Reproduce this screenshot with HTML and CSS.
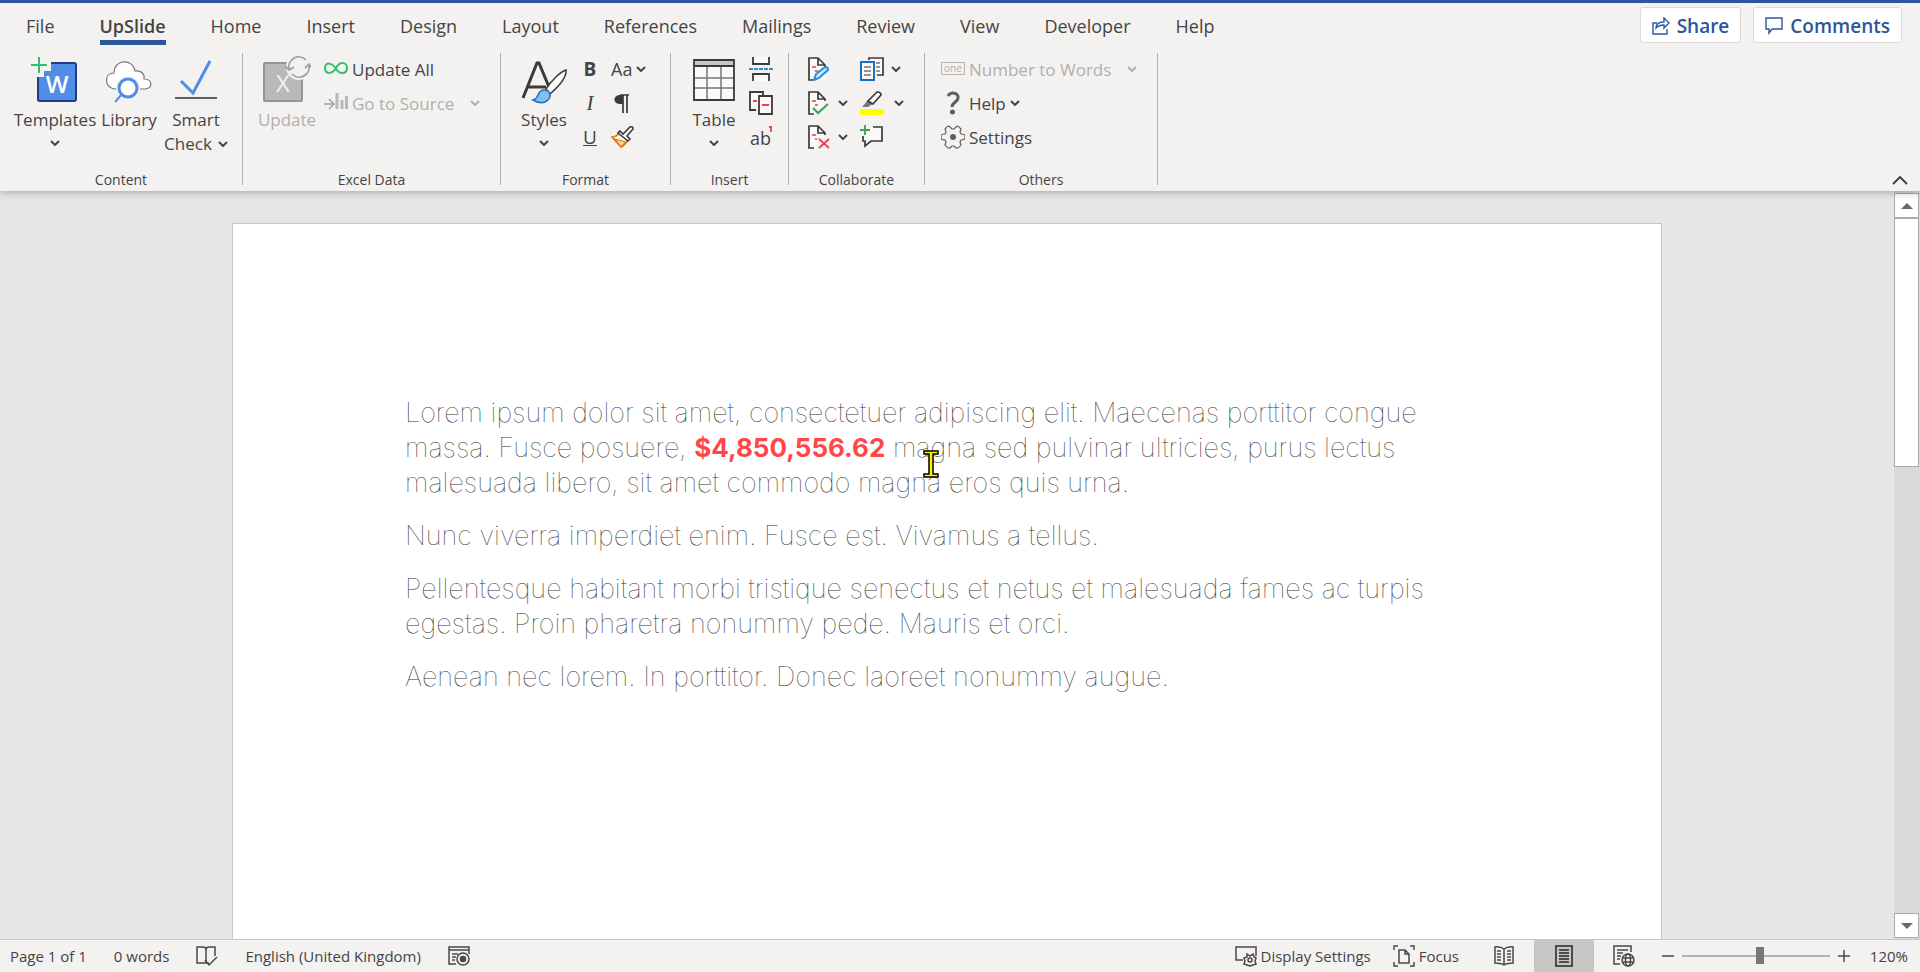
FILE: index.html
```html
<!DOCTYPE html>
<html lang="en">
<head>
    <meta charset="UTF-8">
    <meta name="viewport" content="width=device-width, initial-scale=1.0">
    <title>Document - UpSlide</title>
    <link rel="stylesheet" href="styles.css">
</head>
<body>
    <!-- shared icons -->
    <svg class="defs" width="0" height="0" aria-hidden="true">
        <symbol id="chevron" viewBox="0 0 10 6"><path d="M1 1l4 4 4-4" fill="none" stroke="currentColor" stroke-width="2"/></symbol>
        <symbol id="doc" viewBox="0 0 24 24">
            <path d="M2 1h9l7 7v15H2z" fill="#fafafa"/>
            <path d="M7 23H2V1h9l7 7v2M11 1v7h7" fill="none" stroke="#3b3a39" stroke-width="1.7"/>
            <path d="M5 10h4M8 14h3" stroke="#e8404a" stroke-width="1.7"/>
        </symbol>
    </svg>

    <header class="ribbon">
        <div class="tab-bar">
            <nav class="tabs">
                <a href="#">File</a>
                <a href="#" class="active">UpSlide</a>
                <a href="#">Home</a>
                <a href="#">Insert</a>
                <a href="#">Design</a>
                <a href="#">Layout</a>
                <a href="#">References</a>
                <a href="#">Mailings</a>
                <a href="#">Review</a>
                <a href="#">View</a>
                <a href="#">Developer</a>
                <a href="#">Help</a>
            </nav>
            <div class="actions">
                <button class="action-btn">
                    <svg width="18" height="18" viewBox="0 0 18 18" fill="none" stroke="currentColor" stroke-width="1.4"><path d="M5 6H1v11h14v-5"/><path d="M4 11c0-4 3-6 8-6V1l5 5-5 5V8c-4 0-6 1-8 3z"/></svg>
                    Share
                </button>
                <button class="action-btn">
                    <svg width="18" height="18" viewBox="0 0 18 18" fill="none" stroke="currentColor" stroke-width="1.4"><path d="M1 1h16v11H7l-3 4v-4H1z"/></svg>
                    Comments
                </button>
            </div>
        </div>

        <div class="groups">
            <section class="group content">
                <div class="tools">
                    <button class="big templates">
                        <svg width="48" height="48" viewBox="0 0 48 48">
                            <path d="M20 7h23q2 0 2 2v34q0 3-2 3H9q-3 0-3-3V21h7v-6h7z" fill="#4f8de6"/>
                            <path d="M20 7h23q2 0 2 2v34q0 2-2 2H9q-2 0-2-2V21" fill="none" stroke="#203e86" stroke-width="2"/>
                            <path d="M8 1v16M0 9h16" stroke="#2fc26e" stroke-width="2"/>
                            <text x="26" y="37" class="glyph-w">W</text>
                        </svg>
                        <span>Templates</span>
                        <svg class="chev"><use href="#chevron"/></svg>
                    </button>
                    <button class="big library">
                        <svg width="48" height="48" viewBox="0 0 48 48">
                            <path d="M12 33H9C-1 30-1 17 9 17 9 3 28 2 30 15c6-1 10 3 9 8 9 0 9 10 1 10z" fill="#fff" stroke="#777" stroke-width="1.2"/>
                            <circle cx="23" cy="32" r="12" fill="#f3f2f1"/>
                            <path d="M17 38l-7 8" stroke="#4f8de6" stroke-width="2"/>
                            <circle cx="23" cy="32" r="9" fill="#fff" stroke="#4f8de6" stroke-width="3"/>
                        </svg>
                        <span>Library</span>
                    </button>
                    <button class="big smart">
                        <svg width="48" height="48" viewBox="0 0 48 48"><path d="M9 25l12 12L38 5" fill="none" stroke="#4f8de6" stroke-width="3"/><path d="M3 42h42" stroke="#605e5c" stroke-width="2"/></svg>
                        <span>Smart</span>
                        <span class="with-chev">Check <svg class="chev"><use href="#chevron"/></svg></span>
                    </button>
                </div>
                <h2>Content</h2>
            </section>

            <section class="group excel">
                <div class="tools">
                    <button class="big update" disabled>
                        <svg width="48" height="48" viewBox="0 0 48 48">
                            <rect x="1" y="7" width="38" height="38" rx="1" fill="#bab8bb" stroke="#979593" stroke-width="2"/>
                            <text x="20" y="36" class="glyph-x">X</text>
                            <circle cx="36" cy="11" r="13" fill="#f3f2f1"/>
                            <path d="M26 13a10 10 0 0 1 17-9M46 9a10 10 0 0 1-17 9" fill="none" stroke="#a3a1a0" stroke-width="1.8"/>
                            <path d="M22 10l4 4 5-3M42 12l4-4 3 4" fill="none" stroke="#a3a1a0" stroke-width="1.8"/>
                        </svg>
                        <span>Update</span>
                    </button>
                    <div class="stack">
                        <button class="row">
                            <svg width="24" height="24" viewBox="0 0 24 24"><path d="M12 12C8 5 1 5 1 11s7 7 11 0 11-6 11 0-7 7-11 1z" fill="none" stroke="#2fc26e" stroke-width="2"/></svg>
                            Update All
                        </button>
                        <button class="row" disabled>
                            <svg width="24" height="24" viewBox="0 0 24 24"><path d="M0 13h10M5 8l5 5-5 5" fill="none" stroke="#a3a1a0" stroke-width="1.5"/><path d="M13 2v16M18 9v9M22.500 5v13" stroke="#bab8bb" stroke-width="3"/></svg>
                            Go to Source
                            <svg class="chev far"><use href="#chevron"/></svg>
                        </button>
                    </div>
                </div>
                <h2>Excel Data</h2>
            </section>

            <section class="group format">
                <div class="tools">
                    <button class="big styles">
                        <svg width="48" height="48" viewBox="0 0 48 48">
                            <path d="M3 42L17 7h2l10 24M8 31h18" fill="none" stroke="#3b3a39" stroke-width="3"/>
                            <path d="M26 33c5-8 14-17 20-19 1 7-8 17-16 24z" fill="#fafafa" stroke="#3b3a39" stroke-width="1.500"/>
                            <path d="M13 44c6-1 4-9 10-10 7-1 9 6 5 10-4 4-10 3-15 0z" fill="#83beec" stroke="#1a6fbf" stroke-width="1.500"/>
                        </svg>
                        <span>Styles</span>
                        <svg class="chev"><use href="#chevron"/></svg>
                    </button>
                    <div class="stack letters">
                        <button class="row"><b>B</b></button>
                        <button class="row"><i>I</i></button>
                        <button class="row"><u>U</u></button>
                    </div>
                    <div class="stack">
                        <button class="row aa">Aa <svg class="chev"><use href="#chevron"/></svg></button>
                        <button class="row" aria-label="Paragraph">
                            <svg width="24" height="24" viewBox="0 0 24 24"><path d="M12 4H9a5 4 0 0 0 0 9h3z" fill="#3b3a39"/><path d="M9 4h9M12 4v18M16 4v18" fill="none" stroke="#3b3a39" stroke-width="1.700"/></svg>
                        </button>
                        <button class="row" aria-label="Format painter">
                            <svg width="24" height="24" viewBox="0 0 24 24"><path d="M8 8c-2 3-5 4-7 4l9 10c4-2 6-5 7-8z" fill="#fafafa" stroke="#e07a10" stroke-width="1.700"/><path d="M4 14l11 3-5 5z" fill="#f8d58e" stroke="#e07a10" stroke-width="1.200"/><path d="M9 6l3 3 7-7q3-1 3 2l-6 7 3 3-2 2L7 8z" fill="#fafafa" stroke="#3b3a39" stroke-width="1.600"/></svg>
                        </button>
                    </div>
                </div>
                <h2>Format</h2>
            </section>

            <section class="group insert">
                <div class="tools">
                    <button class="big table">
                        <svg width="48" height="48" viewBox="0 0 48 48">
                            <path d="M4 4h40v40H4z" fill="#fafafa"/>
                            <path d="M4 4h40v6H4z" fill="#c8c6c4"/>
                            <path d="M17 10v34M31 10v34M4 22h40M4 32h40" stroke="#797775" stroke-width="1.500"/>
                            <path d="M4 4h40v40H4zM4 10h40" fill="none" stroke="#3b3a39" stroke-width="1.800"/>
                        </svg>
                        <span>Table</span>
                        <svg class="chev"><use href="#chevron"/></svg>
                    </button>
                    <div class="stack">
                        <button class="row" aria-label="Page break">
                            <svg width="24" height="24" viewBox="0 0 24 24"><path d="M4 0v7h16V0M4 24v-7h16v7" fill="#fafafa" stroke="#3b3a39" stroke-width="1.800"/><path d="M0 12h24" stroke="#2a8dd4" stroke-width="1.800" stroke-dasharray="4 1"/></svg>
                        </button>
                        <button class="row" aria-label="Section break">
                            <svg width="24" height="24" viewBox="0 0 24 24"><path d="M7 19H1V1h13v3" fill="#fafafa" stroke="#3b3a39" stroke-width="1.800"/><path d="M10 5h13v18H10z" fill="#fafafa" stroke="#3b3a39" stroke-width="1.800"/><path d="M4 10h4M13 14h7" stroke="#e8404a" stroke-width="1.800"/></svg>
                        </button>
                        <button class="row" aria-label="Footnote">
                            <svg width="24" height="24" viewBox="0 0 24 24"><text x="1" y="20" class="glyph-ab">ab</text><path d="M20 2h2v5" fill="none" stroke="#e8404a" stroke-width="1.800"/></svg>
                        </button>
                    </div>
                </div>
                <h2>Insert</h2>
            </section>

            <section class="group collaborate">
                <div class="tools">
                    <div class="stack">
                        <button class="row" aria-label="Track changes">
                            <svg width="24" height="24" viewBox="0 0 24 24"><use href="#doc"/><path d="M7 23l2-6 9-7q3 0 3 3l-9 8z" fill="#cfe5f7" stroke="#2a8dd4" stroke-width="2"/></svg>
                        </button>
                        <button class="row" aria-label="Accept">
                            <svg width="24" height="24" viewBox="0 0 24 24"><use href="#doc"/><path d="M6 17l5 5L21 13" fill="none" stroke="#f3f2f1" stroke-width="5"/><path d="M6 17l5 5L21 13" fill="none" stroke="#3fa152" stroke-width="2"/></svg>
                            <svg class="chev"><use href="#chevron"/></svg>
                        </button>
                        <button class="row" aria-label="Reject">
                            <svg width="24" height="24" viewBox="0 0 24 24"><use href="#doc"/><path d="M10 12h12v12H10z" fill="#f3f2f1"/><path d="M12 14l10 9M22 14l-10 9" stroke="#e8404a" stroke-width="1.800"/></svg>
                            <svg class="chev"><use href="#chevron"/></svg>
                        </button>
                    </div>
                    <div class="stack">
                        <button class="row" aria-label="Compare">
                            <svg width="24" height="24" viewBox="0 0 24 24"><path d="M9 3V1h14v17h-6" fill="#fafafa" stroke="#3b3a39" stroke-width="1.700"/><path d="M16 6h4M16 10h4M16 14h4" stroke="#797775" stroke-width="1.500"/><path d="M1 5h13v18H1z" fill="#fafafa" stroke="#1a6fbf" stroke-width="2"/><path d="M4 10h7M4 14h7M4 18h7" stroke="#797775" stroke-width="1.500"/></svg>
                            <svg class="chev"><use href="#chevron"/></svg>
                        </button>
                        <button class="row highlight" aria-label="Highlight">
                            <svg width="24" height="24" viewBox="0 0 24 24"><path d="M0 18h24v6H0z" fill="#ff0"/><path d="M2 16l6-7 5 4-5 3z" fill="#797775"/><path d="M8 10l9-9q4 0 4 3l-8 9z" fill="#fafafa" stroke="#3b3a39" stroke-width="1.700"/></svg>
                            <svg class="chev"><use href="#chevron"/></svg>
                        </button>
                        <button class="row" aria-label="New comment">
                            <svg width="24" height="24" viewBox="0 0 24 24"><path d="M13 2h9v14H11l-6 5v-5H3v-5" fill="#fafafa" stroke="#3b3a39" stroke-width="1.700"/><path d="M5 0v10M0 5h10" stroke="#3fa152" stroke-width="1.800"/></svg>
                        </button>
                    </div>
                </div>
                <h2>Collaborate</h2>
            </section>

            <section class="group others">
                <div class="tools">
                    <div class="stack">
                        <button class="row" disabled>
                            <svg width="24" height="24" viewBox="0 0 24 24"><path d="M.5 5.500h23v12H.5z" fill="none" stroke="#b5b3b1"/><text x="3" y="15" class="glyph-one">one</text></svg>
                            Number to Words
                            <svg class="chev far"><use href="#chevron"/></svg>
                        </button>
                        <button class="row">
                            <svg width="24" height="24" viewBox="0 0 24 24"><path d="M7 5c3-5 11-3 10 2 0 4-6 4-6 9" fill="none" stroke="#605e5c" stroke-width="3"/><circle cx="11.500" cy="21" r="2.500" fill="#605e5c"/></svg>
                            Help <svg class="chev"><use href="#chevron"/></svg>
                        </button>
                        <button class="row">
                            <svg width="24" height="24" viewBox="0 0 24 24"><path d="M5 3q2-3 4-1l2 2h2l2-2q2-2 4 1l1 1-1 3 1 2q4 0 4 2v2q0 2-4 2l-1 2 1 3q-3 4-5 3l-2-2h-2l-2 2q-2 1-5-3l1-3-1-2q-4 0-4-2v-2q0-2 4-2l1-2-1-3z" fill="none" stroke="#605e5c" stroke-width="1.200"/><circle cx="12" cy="12" r="3" fill="#605e5c"/></svg>
                            Settings
                        </button>
                    </div>
                </div>
                <h2>Others</h2>
            </section>

            <button class="collapse" aria-label="Collapse ribbon">
                <svg width="16" height="10" viewBox="0 0 16 10"><path d="M1 9l7-7 7 7" fill="none" stroke="#3b3a39" stroke-width="1.800"/></svg>
            </button>
        </div>
    </header>

    <main class="workspace">
        <div class="canvas">
            <article class="page">
                <p>Lorem ipsum dolor sit amet, consectetuer adipiscing elit. Maecenas porttitor congue massa. Fusce posuere, <strong>$4,850,556.62</strong> magna sed pulvinar ultricies, purus lectus malesuada libero, sit amet commodo magna eros quis urna.</p>
                <p>Nunc viverra imperdiet enim. Fusce est. Vivamus a tellus.</p>
                <p>Pellentesque habitant morbi tristique senectus et netus et malesuada fames ac turpis egestas. Proin pharetra nonummy pede. Mauris et orci.</p>
                <p>Aenean nec lorem. In porttitor. Donec laoreet nonummy augue.</p>
                <svg class="cursor" width="16" height="28" viewBox="0 0 16 28"><path d="M1 1h14v3H10v20h5v3H1v-3h5V4H1z" fill="#fff200" stroke="#000" stroke-width="1.500"/></svg>
            </article>
        </div>
        <div class="scrollbar">
            <button aria-label="Scroll up"><svg width="12" height="6" viewBox="0 0 12 6"><path d="M0 6l6-6 6 6z" fill="#6b6967"/></svg></button>
            <div class="thumb"></div>
            <button aria-label="Scroll down"><svg width="12" height="6" viewBox="0 0 12 6"><path d="M0 0h12L6 6z" fill="#6b6967"/></svg></button>
        </div>
    </main>

    <footer class="status">
        <div class="status-left">
            <span>Page 1 of 1</span>
            <span>0 words</span>
            <button aria-label="Proofing">
                <svg width="22" height="22" viewBox="0 0 22 22" fill="none" stroke="#4a4846" stroke-width="1.500"><path d="M10 4v14H1V2h6q3 0 3 3 0-3 3-3h6v9M8 18l5 0"/><path d="M9 15l4 5 8-8"/></svg>
            </button>
            <span>English (United Kingdom)</span>
            <button aria-label="Record macro">
                <svg width="22" height="22" viewBox="0 0 22 22" fill="none" stroke="#4a4846" stroke-width="1.500"><path d="M8 19H1V2h20v7M1 5h20M4 9h6M4 12h4M4 15h3"/><circle cx="15" cy="14" r="6"/><circle cx="15" cy="14" r="2.500" fill="#4a4846"/></svg>
            </button>
        </div>
        <div class="status-right">
            <button>
                <svg width="22" height="22" viewBox="0 0 22 22" fill="none" stroke="#4a4846" stroke-width="1.500"><path d="M8 15H1V2h20v9"/><path d="M12 9l3 2 3-2 1 3 2 1-1 3 1 3-3 1-3 1-3-1-3-1 1-3-1-3 3-1z" fill="#f3f2f1"/><circle cx="15" cy="15" r="2"/></svg>
                Display Settings
            </button>
            <button class="focus">
                <svg width="22" height="22" viewBox="0 0 22 22" fill="none" stroke="#4a4846" stroke-width="1.500"><path d="M5 1H1v4M17 1h4v4M5 21H1v-4M17 21h4v-4M6 5h6l4 4v9H6zM12 5v4h4"/></svg>
                Focus
            </button>
            <div class="views">
                <button aria-label="Read mode">
                    <svg width="20" height="20" viewBox="0 0 20 20" fill="none" stroke="#4a4846" stroke-width="1.500"><path d="M10 3v15M10 3Q6 0 1 1v16q6 0 9 2 3-2 9-2V1q-5-1-9 2zM3 5h4M3 8h4M3 11h4M3 14h4M13 5h4M13 8h4M13 11h4M13 14h4"/></svg>
                </button>
                <button class="selected" aria-label="Print layout">
                    <svg width="18" height="22" viewBox="0 0 18 22" fill="none" stroke="#252423" stroke-width="1.500"><path d="M1 1h16v20H1zM4 5h10M4 8h10M4 11h10M4 14h10M4 17h10"/></svg>
                </button>
                <button aria-label="Web layout">
                    <svg width="22" height="22" viewBox="0 0 22 22" fill="none" stroke="#4a4846" stroke-width="1.500"><path d="M7 19H1V1h17v6M4 5h11M4 8h6M4 11h4M4 14h3"/><circle cx="15" cy="15" r="6"/><ellipse cx="15" cy="15" rx="2.500" ry="6"/><path d="M9 13h12M9 17h12"/></svg>
                </button>
            </div>
            <div class="zoom">
                <button aria-label="Zoom out"><svg width="14" height="14" viewBox="0 0 14 14"><path d="M1 7h12" stroke="#4a4846" stroke-width="1.500"/></svg></button>
                <input type="range" min="0" max="100" value="53" aria-label="Zoom">
                <button aria-label="Zoom in"><svg width="14" height="14" viewBox="0 0 14 14"><path d="M1 7h12M7 1v12" stroke="#4a4846" stroke-width="1.500"/></svg></button>
            </div>
            <span class="percent">120%</span>
        </div>
    </footer>
</body>
</html>
```
FILE: styles.css
```css
* {
    box-sizing: border-box;
}
body {
    margin: 0;
    height: 100vh;
    display: flex;
    flex-direction: column;
    overflow: hidden;
    background: #e6e6e6;
    color: #444;
    font-family: "Open Sans", "Noto Sans", sans-serif;
    font-size: 17px;
}
button {
    font: inherit;
    color: inherit;
    background: none;
    border: none;
    padding: 0;
}
button:disabled {
    color: #b1afad;
}
svg {
    flex: none;
    display: block;
}
.defs {
    position: absolute;
}
.chev {
    width: 10px;
    height: 6px;
}

/* ribbon */
.ribbon {
    position: relative;
    background: #f3f2f1;
    border-top: 3px solid #2b579a;
    box-shadow: 0 1px 8px rgba(0, 0, 0, 0.3);
}
.tab-bar {
    display: flex;
    justify-content: space-between;
    height: 50px;
    padding: 4px 18px 0 26px;
}
.tabs {
    display: flex;
    gap: 45px;
    font-size: 18px;
}
.tabs a {
    height: 38px;
    line-height: 38px;
    color: #444;
    text-decoration: none;
}
.tabs .active {
    font-weight: 600;
    border-bottom: 5px solid #2b579a;
}
.actions {
    display: flex;
    gap: 12px;
}
.action-btn {
    display: flex;
    align-items: center;
    gap: 7px;
    height: 36px;
    padding: 1px 11px 0;
    background: #fff;
    border: 1px solid #dddbd9;
    border-radius: 3px;
    color: #2b579a;
    font-size: 19px;
    font-weight: 600;
}
.groups {
    display: flex;
    padding-bottom: 6px;
}
.group {
    display: flex;
    flex-direction: column;
    justify-content: space-between;
    height: 132px;
    border-right: 1px solid #b3b0ad;
}
.group h2 {
    margin: 0;
    font-size: 14px;
    line-height: 10px;
    font-weight: 400;
    text-align: center;
}
.tools {
    display: flex;
}
.content { width: 243px; }
.excel { width: 258px; }
.format { width: 170px; }
.insert { width: 118px; }
.collaborate { width: 136px; }
.others { width: 233px; }
.content .tools {
    padding-left: 16px;
    gap: 6px;
}
.excel .tools {
    padding-left: 15px;
    gap: 8px;
}
.format .tools {
    padding-left: 18px;
    gap: 14px;
}
.insert .tools {
    padding-left: 17px;
    gap: 9px;
}
.collaborate .tools {
    padding-left: 18px;
    gap: 12px;
}
.others .tools {
    padding-left: 16px;
}
.big {
    display: flex;
    flex-direction: column;
    align-items: center;
    padding-top: 3px;
    line-height: 24px;
}
.big span {
    margin-top: 4px;
    white-space: nowrap;
}
.big .chev {
    margin-top: 8px;
}
.big .with-chev {
    display: flex;
    align-items: center;
    gap: 6px;
    margin-top: 0;
}
.with-chev .chev {
    margin-top: 0;
}
.templates { width: 78px; }
.library { width: 58px; }
.smart { width: 64px; }
.update { width: 58px; }
.styles { width: 50px; }
.table { width: 52px; }
.stack {
    display: flex;
    flex-direction: column;
    gap: 2px;
}
.row {
    display: flex;
    align-items: center;
    gap: 4px;
    height: 32px;
    white-space: nowrap;
}
.row .far {
    margin-left: 12px;
}
.collaborate .row {
    gap: 7px;
}
.collaborate .highlight {
    gap: 10px;
}
.letters {
    width: 14px;
    font-size: 19px;
}
.letters .row {
    justify-content: center;
}
.letters i {
    font-family: "Liberation Serif", serif;
    font-size: 21px;
}
.aa {
    font-size: 18px;
}
.glyph-w {
    fill: #fff;
    font-size: 24px;
    font-weight: 600;
    text-anchor: middle;
}
.glyph-x {
    fill: #f3f2f1;
    font-size: 24px;
    text-anchor: middle;
}
.glyph-ab {
    fill: #444;
    font-size: 18px;
}
.glyph-one {
    fill: #b1afad;
    font-size: 10px;
}
.collapse {
    margin-left: auto;
    margin-right: 12px;
    align-self: flex-end;
}

/* document */
.workspace {
    flex: 1;
    min-height: 0;
    display: flex;
}
.canvas {
    flex: 1;
    display: flex;
    justify-content: center;
    padding: 32px 232px 0;
    overflow: hidden;
}
.page {
    position: relative;
    flex: 1;
    padding: 171px 172px 0;
    background: #fff;
    border: 1px solid #c6c6c6;
    border-bottom: none;
    font-family: Inter, sans-serif;
    font-size: 27px;
    font-weight: 100;
    line-height: 35px;
    color: #333;
}
.page p {
    margin: 0 0 18px;
}
.page strong {
    font-size: 26px;
    font-weight: 700;
    color: #ff4747;
}
.cursor {
    position: absolute;
    left: 690px;
    top: 226px;
}
.scrollbar {
    display: flex;
    flex-direction: column;
    width: 26px;
    padding: 2px 1px 1px 0;
    background: #dadada;
}
.scrollbar button {
    display: flex;
    align-items: center;
    justify-content: center;
    height: 25px;
    background: #fff;
    border: 1px solid #ababab;
}
.thumb {
    height: 249px;
    margin-bottom: auto;
    background: #fff;
    border: 1px solid #ababab;
}

/* status bar */
.status {
    display: flex;
    justify-content: space-between;
    height: 33px;
    background: #f3f2f1;
    border-top: 1px solid #c6c6c6;
    font-size: 15px;
}
.status-left,
.status-right,
.status button,
.views,
.zoom {
    display: flex;
    align-items: center;
}
.status-left {
    gap: 27px;
    padding-left: 10px;
}
.status-right {
    padding-right: 12px;
}
.status-right button {
    gap: 4px;
}
.focus {
    margin-left: 22px;
}
.views {
    height: 100%;
    margin-left: 15px;
}
.views button {
    justify-content: center;
    width: 60px;
    height: 100%;
}
.views .selected {
    background: #c8c6c4;
}
.zoom {
    margin-left: 7px;
    gap: 7px;
}
.zoom input {
    appearance: none;
    width: 148px;
    height: 18px;
    margin: 0;
    background: none;
}
.zoom input::-webkit-slider-runnable-track {
    height: 2px;
    background: #b3b0ad;
}
.zoom input::-webkit-slider-thumb {
    appearance: none;
    width: 8px;
    height: 17px;
    margin-top: -8px;
    background: #797775;
}
.percent {
    width: 40px;
    margin-left: 17px;
    text-align: right;
}
```
